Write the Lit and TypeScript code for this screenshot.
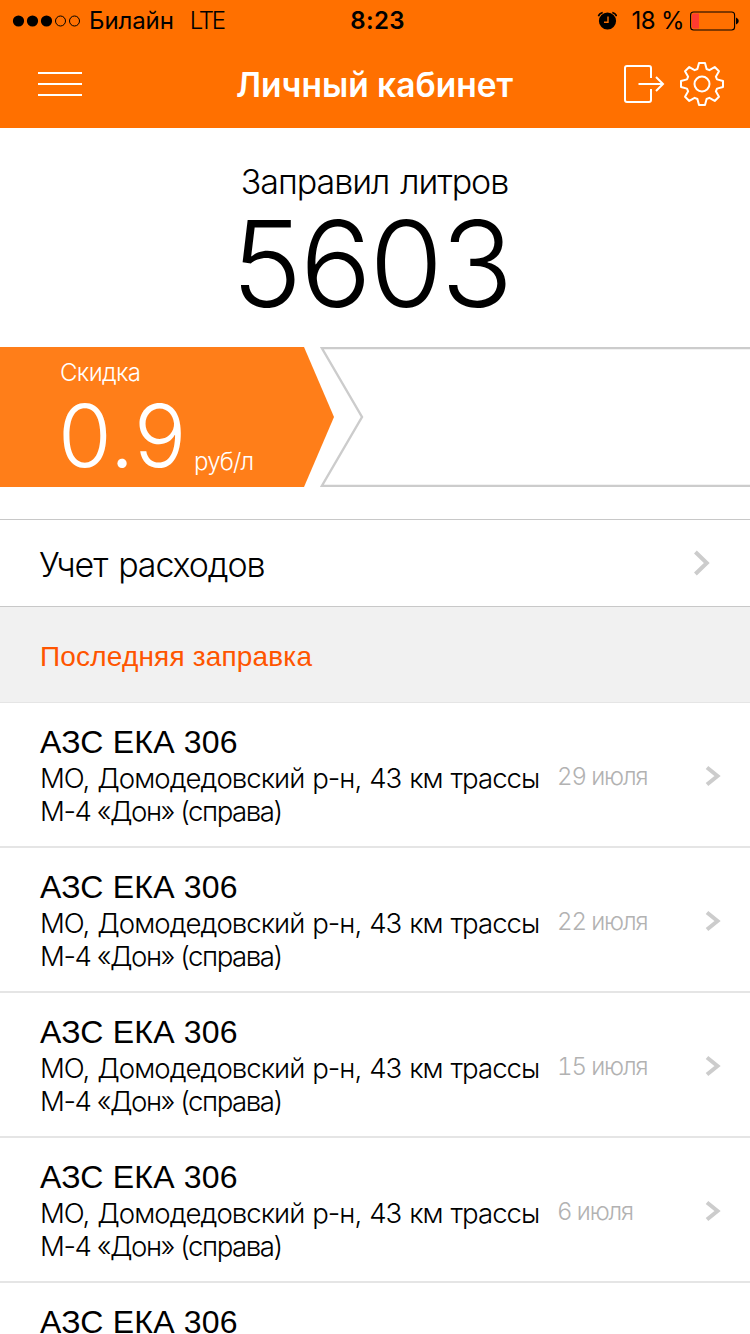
import { LitElement, html, css, svg } from "lit";
import { customElement, property } from "lit/decorators.js";

interface Refuel {
  station: string;
  lines: string[];
  date: string;
}

const ADDRESS = ["МО, Домодедовский р-н, 43 км трассы", "М-4 «Дон» (справа)"];
const REFUELS: Refuel[] = ["29 июля", "22 июля", "15 июля", "6 июля"].map((date) => ({
  station: "АЗС ЕКА 306",
  lines: ADDRESS,
  date,
}));

/* Outline of an eight-toothed gear centred on the origin. */
function gearPath(): string {
  const points: string[] = [];
  const tooth: [number, number][] = [
    [-4.6, -15],
    [-3, -21],
    [3, -21],
    [4.6, -15],
  ];
  for (let i = 0; i < 8; i++) {
    const a = (i * Math.PI) / 4;
    for (const [x, y] of tooth) {
      points.push(
        `${(x * Math.cos(a) - y * Math.sin(a)).toFixed(2)} ${(x * Math.sin(a) + y * Math.cos(a)).toFixed(2)}`
      );
    }
  }
  return `M${points.join("L")}Z`;
}

@customElement("status-bar")
class StatusBar extends LitElement {
  static styles = css`
    :host {
      display: grid;
      grid-template-columns: 1fr auto 1fr;
      height: 40px;
      line-height: 42px;
      font-size: 24px;
      color: #000;
      white-space: nowrap;
    }
    .left, .right { display: flex; align-items: center; height: 41px; }
    .left { padding-left: 12px; }
    .right { justify-content: flex-end; padding-right: 11px; }
    svg { display: block; flex: none; }
    .carrier { margin-left: 8px; letter-spacing: -0.1px; }
    .net { margin-left: 16px; letter-spacing: -2.2px; font-weight: 300; }
    .time { font-weight: 600; letter-spacing: 0.3px; padding-left: 5px; }
    .percent { margin: 0 6px 0 14px; letter-spacing: -0.6px; }
  `;
  render() {
    return html`
      <div class="left">
        <svg width="69" height="12" viewBox="0 0 69 12">
          ${[0, 1, 2, 3, 4].map((i) =>
            i < 3
              ? svg`<circle cx=${6.5 + i * 14} cy="6" r="5.6" />`
              : svg`<circle cx=${6.5 + i * 14} cy="6" r="5" fill="none" stroke="#000" />`
          )}
        </svg>
        <span class="carrier">Билайн</span>
        <span class="net">LTE</span>
      </div>
      <span class="time">8:23</span>
      <div class="right">
        <svg width="20" height="20" viewBox="0 0 20 20">
          <circle cx="10.5" cy="10" r="8.6" />
          <path d="M1.4 5.2Q2.3 2.3 5.7 1.4M19.6 5.2Q18.7 2.3 15.3 1.4" fill="none" stroke="#000" stroke-width="1.6" />
          <path d="M11 5.5V11.3H7" fill="none" stroke="#ff7000" stroke-width="1.4" />
        </svg>
        <span class="percent">18 %</span>
        <svg width="49" height="20" viewBox="0 0 49 20">
          <rect x="0.6" y="1" width="44" height="18" rx="3" fill="none" stroke="#000" stroke-width="1.1" />
          <path d="M3.5 2.5H9V17.5H3.5Q2 17.5 2 16V4Q2 2.5 3.5 2.5Z" fill="#ff3b30" />
          <path d="M46 6.5Q48.8 7.5 48.8 10T46 13.5Z" />
        </svg>
      </div>
    `;
  }
}

@customElement("nav-bar")
class NavBar extends LitElement {
  static styles = css`
    :host {
      display: grid;
      grid-template-columns: 1fr auto 1fr;
      height: 88px;
      align-items: center;
      color: #fff;
    }
    .menu { display: flex; flex-direction: column; gap: 9px; width: 44px; padding-left: 38px; }
    .bar { height: 2px; background: #fff; }
    .title { font-size: 33.5px; line-height: 86px; padding: 2px 1px 0 0; font-weight: 600; white-space: nowrap; }
    .actions { display: flex; justify-content: flex-end; align-items: center; gap: 15px; padding-right: 26px; }
    svg { display: block; fill: none; stroke: #fff; stroke-width: 2; }
  `;
  render() {
    return html`
      <div class="menu"><div class="bar"></div><div class="bar"></div><div class="bar"></div></div>
      <div class="title">Личный кабинет</div>
      <div class="actions">
        <svg width="41" height="40" viewBox="0 0 41 40">
          <path d="M27 14V4Q27 2 25 2H3Q1 2 1 4V36Q1 38 3 38H25Q27 38 27 36V25" />
          <path d="M14.5 20H39M32 13L39 20L32 27" />
        </svg>
        <svg width="44" height="44" viewBox="-22 -22 44 44">
          <path d=${gearPath()} stroke-linejoin="round" />
          <circle r="7.5" />
        </svg>
      </div>
    `;
  }
}

@customElement("discount-banner")
class DiscountBanner extends LitElement {
  static styles = css`
    :host { display: flex; height: 140px; color: #fff; font-weight: 300; }
    .current {
      box-sizing: border-box;
      width: 334px;
      height: 140px;
      padding: 11px 0 0 60px;
      background: #ff7e19;
      clip-path: polygon(0 0, 304px 0, 334px 70px, 304px 140px, 0 140px);
    }
    .label { font-size: 24px; line-height: 30px; letter-spacing: -0.65px; }
    .amount { display: flex; align-items: flex-start; margin-top: 4px; }
    .value { width: 125px; font-size: 87px; line-height: 88px; margin-left: -2px; letter-spacing: 0.3px; }
    .unit { font-size: 24px; line-height: 30px; margin: 55px 0 0 11px; letter-spacing: -0.8px; }
    .next { display: block; margin-left: -14px; fill: none; stroke: #ccc; stroke-width: 2.4; }
  `;
  render() {
    return html`
      <div class="current">
        <div class="label">Скидка</div>
        <div class="amount"><span class="value">0.9</span><span class="unit">руб/л</span></div>
      </div>
      <svg class="next" width="430" height="140" viewBox="320 0 430 140">
        <path d="M752 1H321.8L362 70L321.8 139H752" />
      </svg>
    `;
  }
}

@customElement("refuel-row")
class RefuelRow extends LitElement {
  @property({ attribute: false }) refuel!: Refuel;
  static styles = css`
    :host {
      display: flex;
      box-sizing: border-box;
      height: 145px;
      padding: 19px 29px 0 40px;
      border-bottom: 2px solid #e5e5e5;
      white-space: nowrap;
    }
    .info { width: 517px; }
    .station { font: 32px/40px "Liberation Sans", sans-serif; letter-spacing: 0.2px; }
    .address { font-size: 27.6px; line-height: 33px; font-weight: 300; }
    .line { letter-spacing: -0.98px; word-spacing: 1.1px; }
    .line + .line { letter-spacing: -1.45px; word-spacing: 0; }
    .date {
      flex: 1;
      margin-top: 40px;
      font-size: 24px;
      line-height: 30px;
      font-weight: 300;
      letter-spacing: -1.1px;
      font-variant-numeric: tabular-nums;
      color: #b2b2b2;
    }
    svg { margin-top: 43px; fill: none; stroke: #ccc; stroke-width: 4; }
  `;
  render() {
    return html`
      <div class="info">
        <div class="station">${this.refuel.station}</div>
        <div class="address">${this.refuel.lines.map((line) => html`<div class="line">${line}</div>`)}</div>
      </div>
      <div class="date">${this.refuel.date}</div>
      <svg width="16" height="22" viewBox="0 0 16 22"><path d="M2 2.5L12.5 11L2 19.5" /></svg>
    `;
  }
}

@customElement("app-root")
class AppRoot extends LitElement {
  static styles = css`
    :host {
      display: block;
      height: 1334px;
      overflow: hidden;
      background: #fff;
      color: #000;
      font-family: Inter, "Liberation Sans", sans-serif;
    }
    .header { background: #ff7000; }
    .stats { box-sizing: border-box; height: 219px; padding-top: 32px; text-align: center; }
    .caption {
      padding-right: 1px;
      font-size: 34px;
      line-height: 44px;
      font-weight: 300;
      letter-spacing: -1.05px;
      word-spacing: 2.5px;
    }
    .litres { font-size: 119px; line-height: 120px; font-weight: 300; letter-spacing: -2.1px; padding-right: 7.6px; }
    .expenses {
      display: flex;
      justify-content: space-between;
      align-items: center;
      height: 86px;
      margin-top: 32px;
      padding: 0 40px 0 39px;
      border-top: 1px solid #c8c8c8;
      border-bottom: 1px solid #c8c8c8;
    }
    .expenses-label {
      padding-top: 4px;
      font-size: 34px;
      line-height: 82px;
      font-weight: 300;
      letter-spacing: -1.1px;
      word-spacing: 2.5px;
    }
    .chevron { fill: none; stroke: #ccc; stroke-width: 4; }
    .section {
      padding: 4px 0 0 40px;
      line-height: 91px;
      font-family: "Liberation Sans", sans-serif;
      font-size: 28px;
      letter-spacing: 0.18px;
      color: #ff5500;
      background: #f1f1f1;
      border-bottom: 1px solid #e5e5e5;
    }
    .partial { padding: 19px 0 0 40px; font: 32px/40px "Liberation Sans", sans-serif; letter-spacing: 0.2px; }
  `;
  render() {
    return html`
      <div class="header"><status-bar></status-bar><nav-bar></nav-bar></div>
      <div class="stats">
        <div class="caption">Заправил литров</div>
        <div class="litres">5603</div>
      </div>
      <discount-banner></discount-banner>
      <div class="expenses">
        <span class="expenses-label">Учет расходов</span>
        <svg class="chevron" width="17" height="26" viewBox="0 0 17 26"><path d="M2.4 2L13.8 13L2.4 24" /></svg>
      </div>
      <div class="section">Последняя заправка</div>
      ${REFUELS.map((refuel) => html`<refuel-row .refuel=${refuel}></refuel-row>`)}
      <div class="partial">АЗС ЕКА 306</div>
    `;
  }
}
